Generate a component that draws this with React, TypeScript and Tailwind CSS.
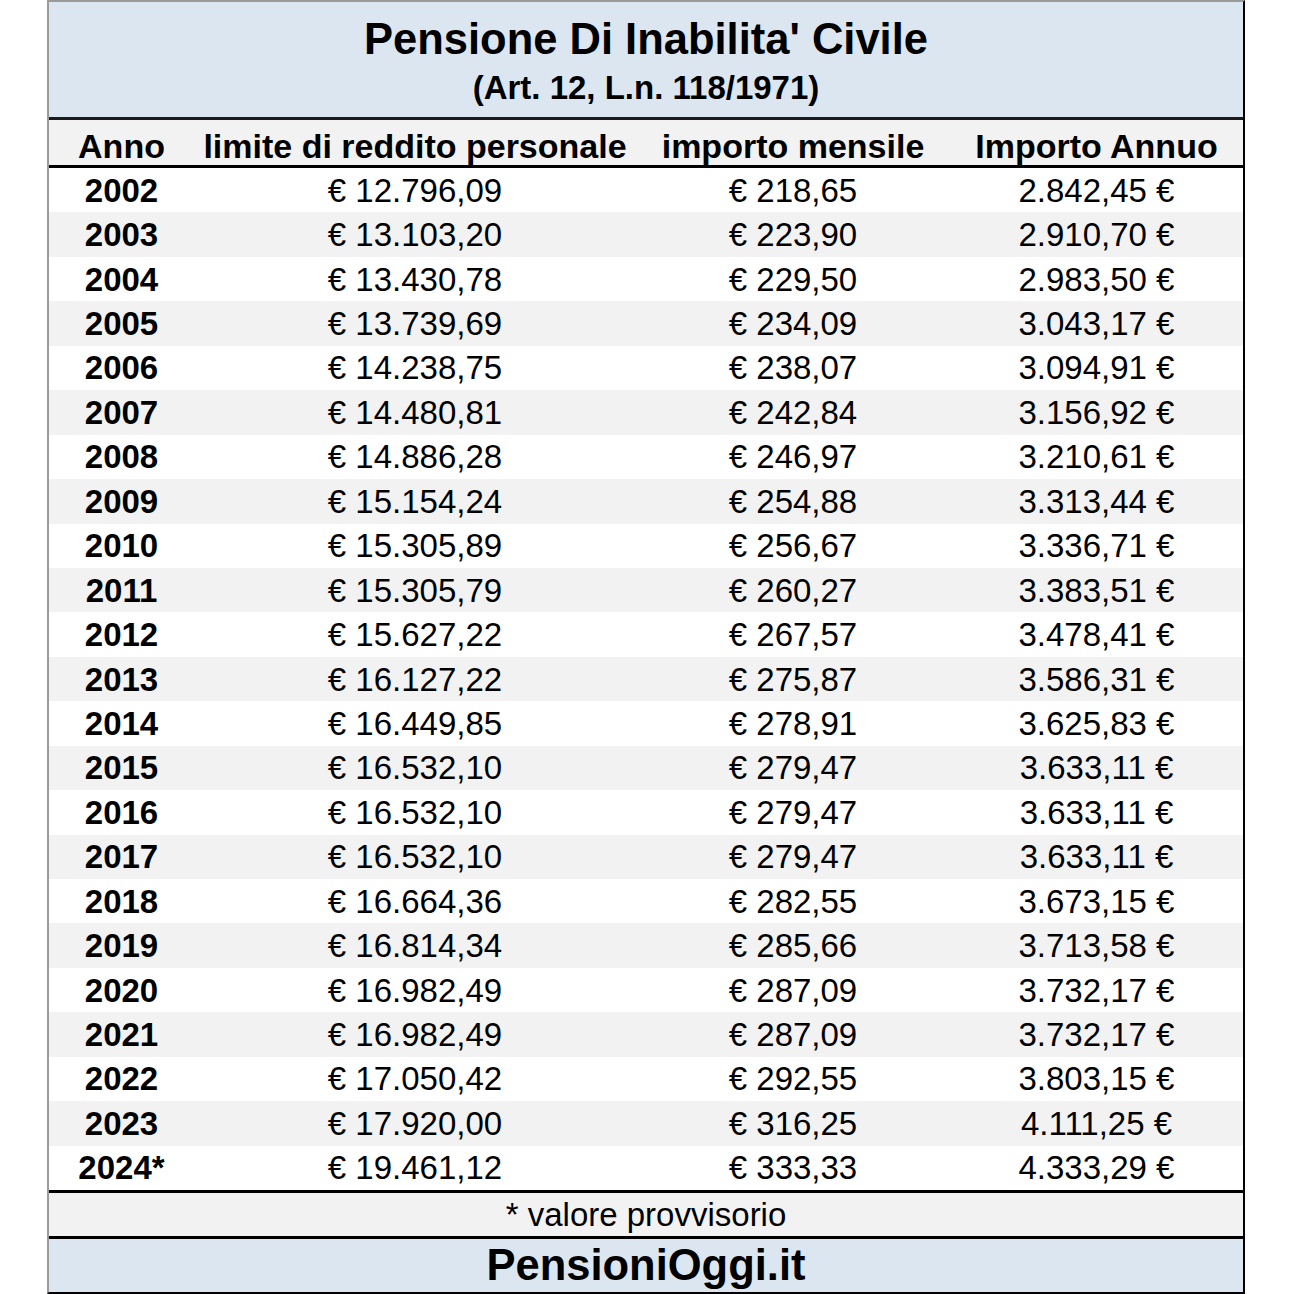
import React from "react";

const rows: [string, string, string, string][] = [
  ["2002", "€ 12.796,09", "€ 218,65", "2.842,45 €"],
  ["2003", "€ 13.103,20", "€ 223,90", "2.910,70 €"],
  ["2004", "€ 13.430,78", "€ 229,50", "2.983,50 €"],
  ["2005", "€ 13.739,69", "€ 234,09", "3.043,17 €"],
  ["2006", "€ 14.238,75", "€ 238,07", "3.094,91 €"],
  ["2007", "€ 14.480,81", "€ 242,84", "3.156,92 €"],
  ["2008", "€ 14.886,28", "€ 246,97", "3.210,61 €"],
  ["2009", "€ 15.154,24", "€ 254,88", "3.313,44 €"],
  ["2010", "€ 15.305,89", "€ 256,67", "3.336,71 €"],
  ["2011", "€ 15.305,79", "€ 260,27", "3.383,51 €"],
  ["2012", "€ 15.627,22", "€ 267,57", "3.478,41 €"],
  ["2013", "€ 16.127,22", "€ 275,87", "3.586,31 €"],
  ["2014", "€ 16.449,85", "€ 278,91", "3.625,83 €"],
  ["2015", "€ 16.532,10", "€ 279,47", "3.633,11 €"],
  ["2016", "€ 16.532,10", "€ 279,47", "3.633,11 €"],
  ["2017", "€ 16.532,10", "€ 279,47", "3.633,11 €"],
  ["2018", "€ 16.664,36", "€ 282,55", "3.673,15 €"],
  ["2019", "€ 16.814,34", "€ 285,66", "3.713,58 €"],
  ["2020", "€ 16.982,49", "€ 287,09", "3.732,17 €"],
  ["2021", "€ 16.982,49", "€ 287,09", "3.732,17 €"],
  ["2022", "€ 17.050,42", "€ 292,55", "3.803,15 €"],
  ["2023", "€ 17.920,00", "€ 316,25", "4.111,25 €"],
  ["2024*", "€ 19.461,12", "€ 333,33", "4.333,29 €"],
];

const cols = "grid grid-cols-[145px_442px_314px_293px]";

export default function App() {
  return (
    <div
      className="w-[1294px] h-[1294px] bg-white text-black"
      style={{ fontFamily: '"Liberation Sans", Arial, sans-serif' }}
    >
      <div className="ml-[47px] w-[1198px] h-[1294px] flex flex-col border-t-2 border-l-2 border-t-[#9a9a9a] border-l-[#9a9a9a] border-r-2 border-r-black border-b-2 border-b-black">
        <div className="h-[115px] bg-[#dce6f1] flex flex-col items-center pt-[16px]">
          <div className="text-[43.5px] leading-[43px] font-bold">Pensione Di Inabilita' Civile</div>
          <div className="text-[33px] leading-[33px] font-bold mt-[10px]">(Art. 12, L.n. 118/1971)</div>
        </div>
        <div className="h-[3px] bg-[#1a1a1a]" />
        <div className={`${cols} h-[45px] bg-[#f2f2f2] items-center pt-[7px] text-[34px] leading-none font-bold`}>
          <div className="text-center">Anno</div>
          <div className="text-center">limite di reddito personale</div>
          <div className="text-center">importo mensile</div>
          <div className="text-center">Importo Annuo</div>
        </div>
        <div className="h-[3px] bg-black" />
        <div className="flex flex-col h-[1022px]">
          {rows.map((r, i) => (
            <div
              key={r[0]}
              className={`${cols} flex-1 items-center text-[33px] leading-none ${i % 2 === 0 ? "bg-white" : "bg-[#f2f2f2]"}`}
            >
              <div className="text-center font-bold">{r[0]}</div>
              <div className="text-center">{r[1]}</div>
              <div className="text-center">{r[2]}</div>
              <div className="text-center">{r[3]}</div>
            </div>
          ))}
        </div>
        <div className="h-[3px] bg-black" />
        <div className="h-[43px] bg-[#f2f2f2] flex items-center justify-center text-[33px] leading-none">
          * valore provvisorio
        </div>
        <div className="h-[3px] bg-black" />
        <div className="flex-1 bg-[#dce6f1] flex items-center justify-center text-[43.5px] leading-none font-bold pt-[1px]">
          PensioniOggi.it
        </div>
      </div>
    </div>
  );
}
